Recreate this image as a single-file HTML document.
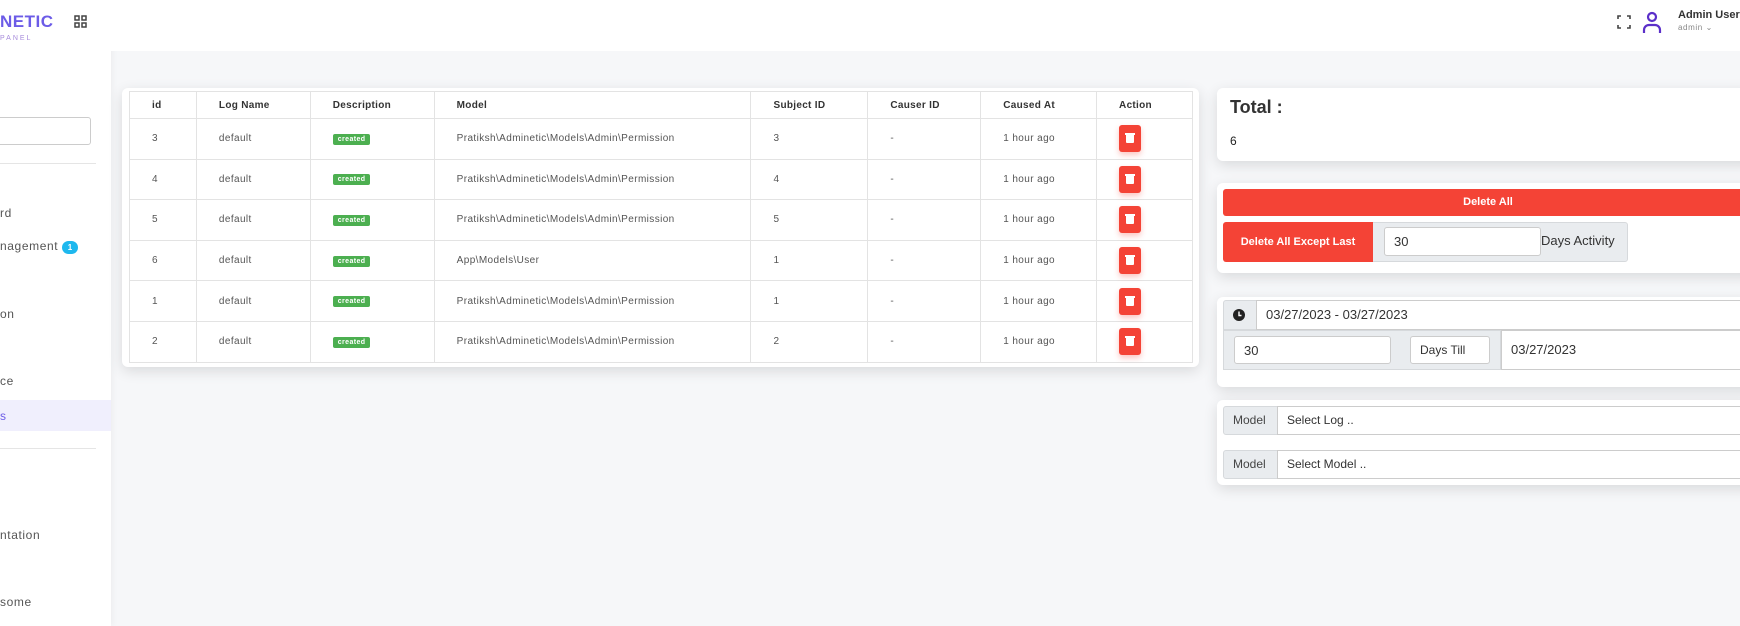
<!DOCTYPE html>
<html><head><style>
*{box-sizing:border-box;margin:0;padding:0}
body{width:1740px;height:626px;overflow:hidden;background:#f6f7f9;font-family:"Liberation Sans",sans-serif;position:relative;color:#333}
.abs{position:absolute}
.side{left:0;top:0;width:111px;height:626px;background:#fff;box-shadow:2px 0 6px rgba(0,0,0,.04)}
.hdr{left:111px;top:0;width:1629px;height:51px;background:#fff}
.mi{position:absolute;left:0;font-size:12px;color:#555;letter-spacing:.6px}
table{border-collapse:collapse;font-size:10px;color:#555}
td,th{border:1px solid #e3e3e3;text-align:left;padding-left:22px}
th{height:27px;font-weight:bold;color:#333;letter-spacing:.3px}
td{height:40.6px;letter-spacing:.4px}
.b{display:inline-block;background:#4caf50;color:#fff;font-size:7px;font-weight:bold;padding:2px 5px;border-radius:2px}
.del{display:inline-block;width:22px;height:27px;background:#f44336;border-radius:3px;position:relative;box-shadow:0 3px 6px rgba(244,67,54,.3);vertical-align:middle}
.del:before{content:"";position:absolute;left:7px;top:10px;width:8px;height:8px;background:#fff;border-radius:0 0 1px 1px}
.del:after{content:"";position:absolute;left:6px;top:8px;width:10px;height:2px;background:#fff}
.card{background:#fff;border-radius:6px;box-shadow:0 4px 14px rgba(0,0,0,.12)}
.gray{background:#e9ecef;border:1px solid #d6d9dc}
.inp{background:#fff;border:1px solid #ccc;border-radius:3px;font-size:13px;color:#333;padding-left:9px;display:flex;align-items:center}
</style></head><body>
<div class="abs side">
 <div class="abs" style="left:0;top:12px;font-size:17px;font-weight:bold;color:#6c5ce7;letter-spacing:.5px">NETIC</div>
 <div class="abs" style="left:0;top:35px;font-size:7px;color:#a78bdb;letter-spacing:2px">PANEL</div>
 <svg class="abs" style="left:74px;top:15px" width="13" height="13" viewBox="0 0 13 13" fill="none" stroke="#444" stroke-width="1.5"><rect x="1" y="1" width="4" height="4"/><rect x="8" y="1" width="4" height="4"/><rect x="1" y="8" width="4" height="4"/><rect x="8" y="8" width="4" height="4"/></svg>
 <div class="abs" style="left:-5px;top:117px;width:96px;height:28px;border:1px solid #ccc;border-radius:3px"></div>
 <div class="abs" style="left:0;top:163px;width:96px;height:1px;background:#e5e5e5"></div>
 <div class="mi" style="top:206px">rd</div>
 <div class="mi" style="top:239px">nagement</div>
 <div class="abs" style="left:62px;top:241px;width:16px;height:13px;border-radius:7px;background:#1eb8ee;color:#fff;font-size:8px;font-weight:bold;text-align:center;line-height:13px">1</div>
 <div class="mi" style="top:307px">on</div>
 <div class="mi" style="top:374px">ce</div>
 <div class="abs" style="left:0;top:400px;width:111px;height:31px;background:#f0effd"></div>
 <div class="mi" style="top:409px;color:#6c5ce7">s</div>
 <div class="abs" style="left:0;top:448px;width:96px;height:1px;background:#e5e5e5"></div>
 <div class="mi" style="top:528px">ntation</div>
 <div class="mi" style="top:595px">some</div>
</div>
<div class="abs hdr"></div>
<svg class="abs" style="left:1617px;top:15px" width="14" height="14" viewBox="0 0 14 14" fill="none" stroke="#444" stroke-width="1.6"><path d="M1 4V1h3M10 1h3v3M13 10v3h-3M4 13H1v-3"/></svg>
<svg class="abs" style="left:1642px;top:11px" width="20" height="22" viewBox="0 0 20 22" fill="none" stroke="#5b2fc9" stroke-width="2.2"><circle cx="10" cy="6" r="4"/><path d="M2 22v-3a5 5 0 0 1 5-5h6a5 5 0 0 1 5 5v3"/></svg>
<div class="abs" style="left:1678px;top:9px;font-size:11px;font-weight:bold;color:#333">Admin User</div>
<div class="abs" style="left:1678px;top:23px;font-size:8px;color:#888;letter-spacing:.6px">admin ⌄</div>

<div class="abs card" style="left:122px;top:88px;width:1077px;height:279px;border-radius:6px"></div>
<table class="abs" style="left:129px;top:91px;width:1064px">
<colgroup><col style="width:67px"><col style="width:114px"><col style="width:124px"><col style="width:317px"><col style="width:117px"><col style="width:113px"><col style="width:116px"><col style="width:96px"></colgroup>
<tr><th>id</th><th>Log Name</th><th>Description</th><th>Model</th><th>Subject ID</th><th>Causer ID</th><th>Caused At</th><th>Action</th></tr>
<tr><td>3</td><td>default</td><td><span class="b">created</span></td><td>Pratiksh\Adminetic\Models\Admin\Permission</td><td>3</td><td>-</td><td>1 hour ago</td><td><span class="del"></span></td></tr>
<tr><td>4</td><td>default</td><td><span class="b">created</span></td><td>Pratiksh\Adminetic\Models\Admin\Permission</td><td>4</td><td>-</td><td>1 hour ago</td><td><span class="del"></span></td></tr>
<tr><td>5</td><td>default</td><td><span class="b">created</span></td><td>Pratiksh\Adminetic\Models\Admin\Permission</td><td>5</td><td>-</td><td>1 hour ago</td><td><span class="del"></span></td></tr>
<tr><td>6</td><td>default</td><td><span class="b">created</span></td><td>App\Models\User</td><td>1</td><td>-</td><td>1 hour ago</td><td><span class="del"></span></td></tr>
<tr><td>1</td><td>default</td><td><span class="b">created</span></td><td>Pratiksh\Adminetic\Models\Admin\Permission</td><td>1</td><td>-</td><td>1 hour ago</td><td><span class="del"></span></td></tr>
<tr><td>2</td><td>default</td><td><span class="b">created</span></td><td>Pratiksh\Adminetic\Models\Admin\Permission</td><td>2</td><td>-</td><td>1 hour ago</td><td><span class="del"></span></td></tr>
</table>

<div class="abs card" style="left:1217px;top:88px;width:540px;height:73px"></div>
<div class="abs" style="left:1230px;top:97px;font-size:18px;font-weight:bold;color:#333">Total :</div>
<div class="abs" style="left:1230px;top:134px;font-size:12px;color:#222">6</div>

<div class="abs card" style="left:1217px;top:183px;width:540px;height:90px"></div>
<div class="abs" style="left:1223px;top:189px;width:530px;height:27px;background:#f44336;border-radius:3px;color:#fff;font-size:11px;font-weight:bold;text-align:center;line-height:27px">Delete All</div>
<div class="abs gray" style="left:1372px;top:222px;width:256px;height:40px;border-radius:0 3px 3px 0"></div>
<div class="abs" style="left:1223px;top:222px;width:150px;height:40px;background:#f44336;color:#fff;font-size:11px;font-weight:bold;text-align:center;line-height:40px;border-radius:3px 0 0 3px">Delete All Except Last</div>
<div class="abs inp" style="left:1384px;top:227px;width:157px;height:29px">30</div>
<div class="abs" style="left:1541px;top:233px;font-size:13px;color:#333">Days Activity</div>

<div class="abs card" style="left:1217px;top:297px;width:540px;height:90px"></div>
<div class="abs gray" style="left:1223px;top:300px;width:34px;height:30px;border-radius:3px 0 0 0"></div>
<svg class="abs" style="left:1233px;top:309px" width="12" height="12" viewBox="0 0 12 12"><circle cx="6" cy="6" r="6" fill="#222"/><path d="M6 2.5V6.5H8.5" stroke="#fff" stroke-width="1.4" fill="none"/></svg>
<div class="abs" style="left:1256px;top:300px;width:500px;height:30px;border:1px solid #ccc;background:#fff;font-size:13px;padding-left:9px;line-height:28px">03/27/2023 - 03/27/2023</div>
<div class="abs gray" style="left:1223px;top:330px;width:278px;height:40px"></div>
<div class="abs inp" style="left:1234px;top:336px;width:157px;height:28px">30</div>
<div class="abs inp" style="left:1410px;top:336px;width:80px;height:28px;font-size:12px">Days Till</div>
<div class="abs" style="left:1501px;top:330px;width:260px;height:40px;border:1px solid #ccc;background:#fff;font-size:13px;padding-left:9px;line-height:38px">03/27/2023</div>

<div class="abs card" style="left:1217px;top:400px;width:540px;height:85px"></div>
<div class="abs gray" style="left:1223px;top:406px;width:55px;height:29px;font-size:12px;color:#444;padding-left:9px;line-height:27px;border-radius:3px 0 0 3px">Model</div>
<div class="abs" style="left:1277px;top:406px;width:480px;height:29px;border:1px solid #ccc;background:#fff;font-size:12px;padding-left:9px;line-height:27px">Select Log ..</div>
<div class="abs gray" style="left:1223px;top:450px;width:55px;height:29px;font-size:12px;color:#444;padding-left:9px;line-height:27px;border-radius:3px 0 0 3px">Model</div>
<div class="abs" style="left:1277px;top:450px;width:480px;height:29px;border:1px solid #ccc;background:#fff;font-size:12px;padding-left:9px;line-height:27px">Select Model ..</div>
</body></html>
